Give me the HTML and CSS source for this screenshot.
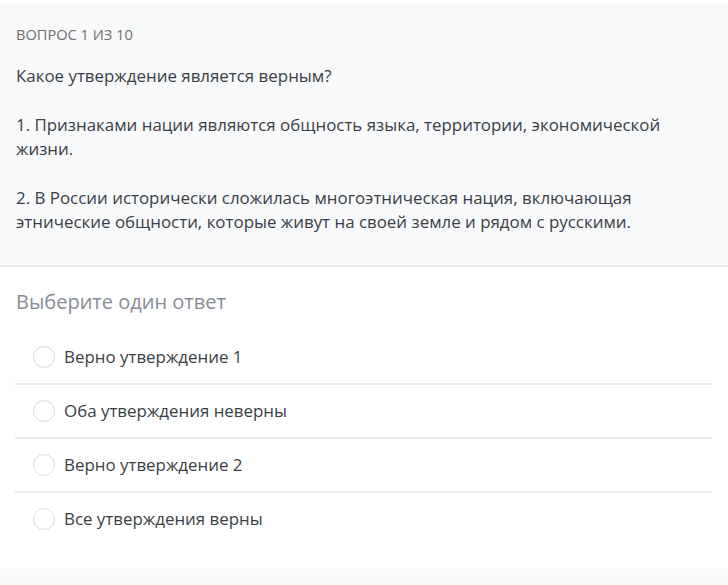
FILE: index.html
```html
<!DOCTYPE html>
<html lang="ru">
<head>
<meta charset="utf-8">
<link rel="stylesheet" href="styles.css">
</head>
<body>
<div class="page">
  <section class="question">
    <div class="counter">ВОПРОС 1 ИЗ 10</div>
    <p class="text">Какое утверждение является верным?</p>
    <p class="text">1. Признаками нации являются общность языка, территории, экономической жизни.</p>
    <p class="text">2. В России исторически сложилась многоэтническая нация, включающая этнические общности, которые живут на своей земле и рядом с русскими.</p>
  </section>
  <section class="answers">
    <h2 class="prompt">Выберите один ответ</h2>
    <ul class="options">
      <li class="option"><span class="radio"></span><span class="label">Верно утверждение 1</span></li>
      <li class="option"><span class="radio"></span><span class="label">Оба утверждения неверны</span></li>
      <li class="option"><span class="radio"></span><span class="label">Верно утверждение 2</span></li>
      <li class="option"><span class="radio"></span><span class="label">Все утверждения верны</span></li>
    </ul>
  </section>
  <div class="footer"></div>
</div>
</body>
</html>
```
FILE: styles.css
```css
html, body {
  margin: 0;
  padding: 0;
  background: #ffffff;
}
body {
  font-family: "Open Sans", "Noto Sans", sans-serif;
  color: #3a3f45;
}
.page {
  padding-top: 4px;
}
.question {
  background: #f8f9fb;
  border-bottom: 2px solid #ebebeb;
  padding: 20px 16px 30px 16px;
}
.counter {
  font-size: 14.6px;
  line-height: 20px;
  color: #6e6e6e;
  margin-bottom: 20px;
}
.text {
  margin: 0 0 24px 0;
  font-size: 16.9px;
  line-height: 24.5px;
  color: #3a3f45;
}
.text:last-child {
  margin-bottom: 0;
}
.answers {
  padding: 21px 16px 24px 15px;
}
.prompt {
  margin: 0 0 15px 1px;
  font-size: 20px;
  line-height: 28px;
  font-weight: 400;
  color: #878d95;
}
.options {
  list-style: none;
  margin: 0;
  padding: 0;
}
.option {
  display: flex;
  align-items: center;
  height: 52px;
  padding-left: 18px;
  border-bottom: 2px solid #ececec;
}
.option:last-child {
  border-bottom: none;
}
.radio {
  width: 20px;
  height: 20px;
  border: 1.5px solid #dadada;
  border-radius: 50%;
  background: #fff;
  margin-right: 9px;
  flex: none;
}
.label {
  font-size: 16.9px;
  color: #3a3f45;
}
.footer {
  background: #fafafa;
  height: 20px;
}
```
